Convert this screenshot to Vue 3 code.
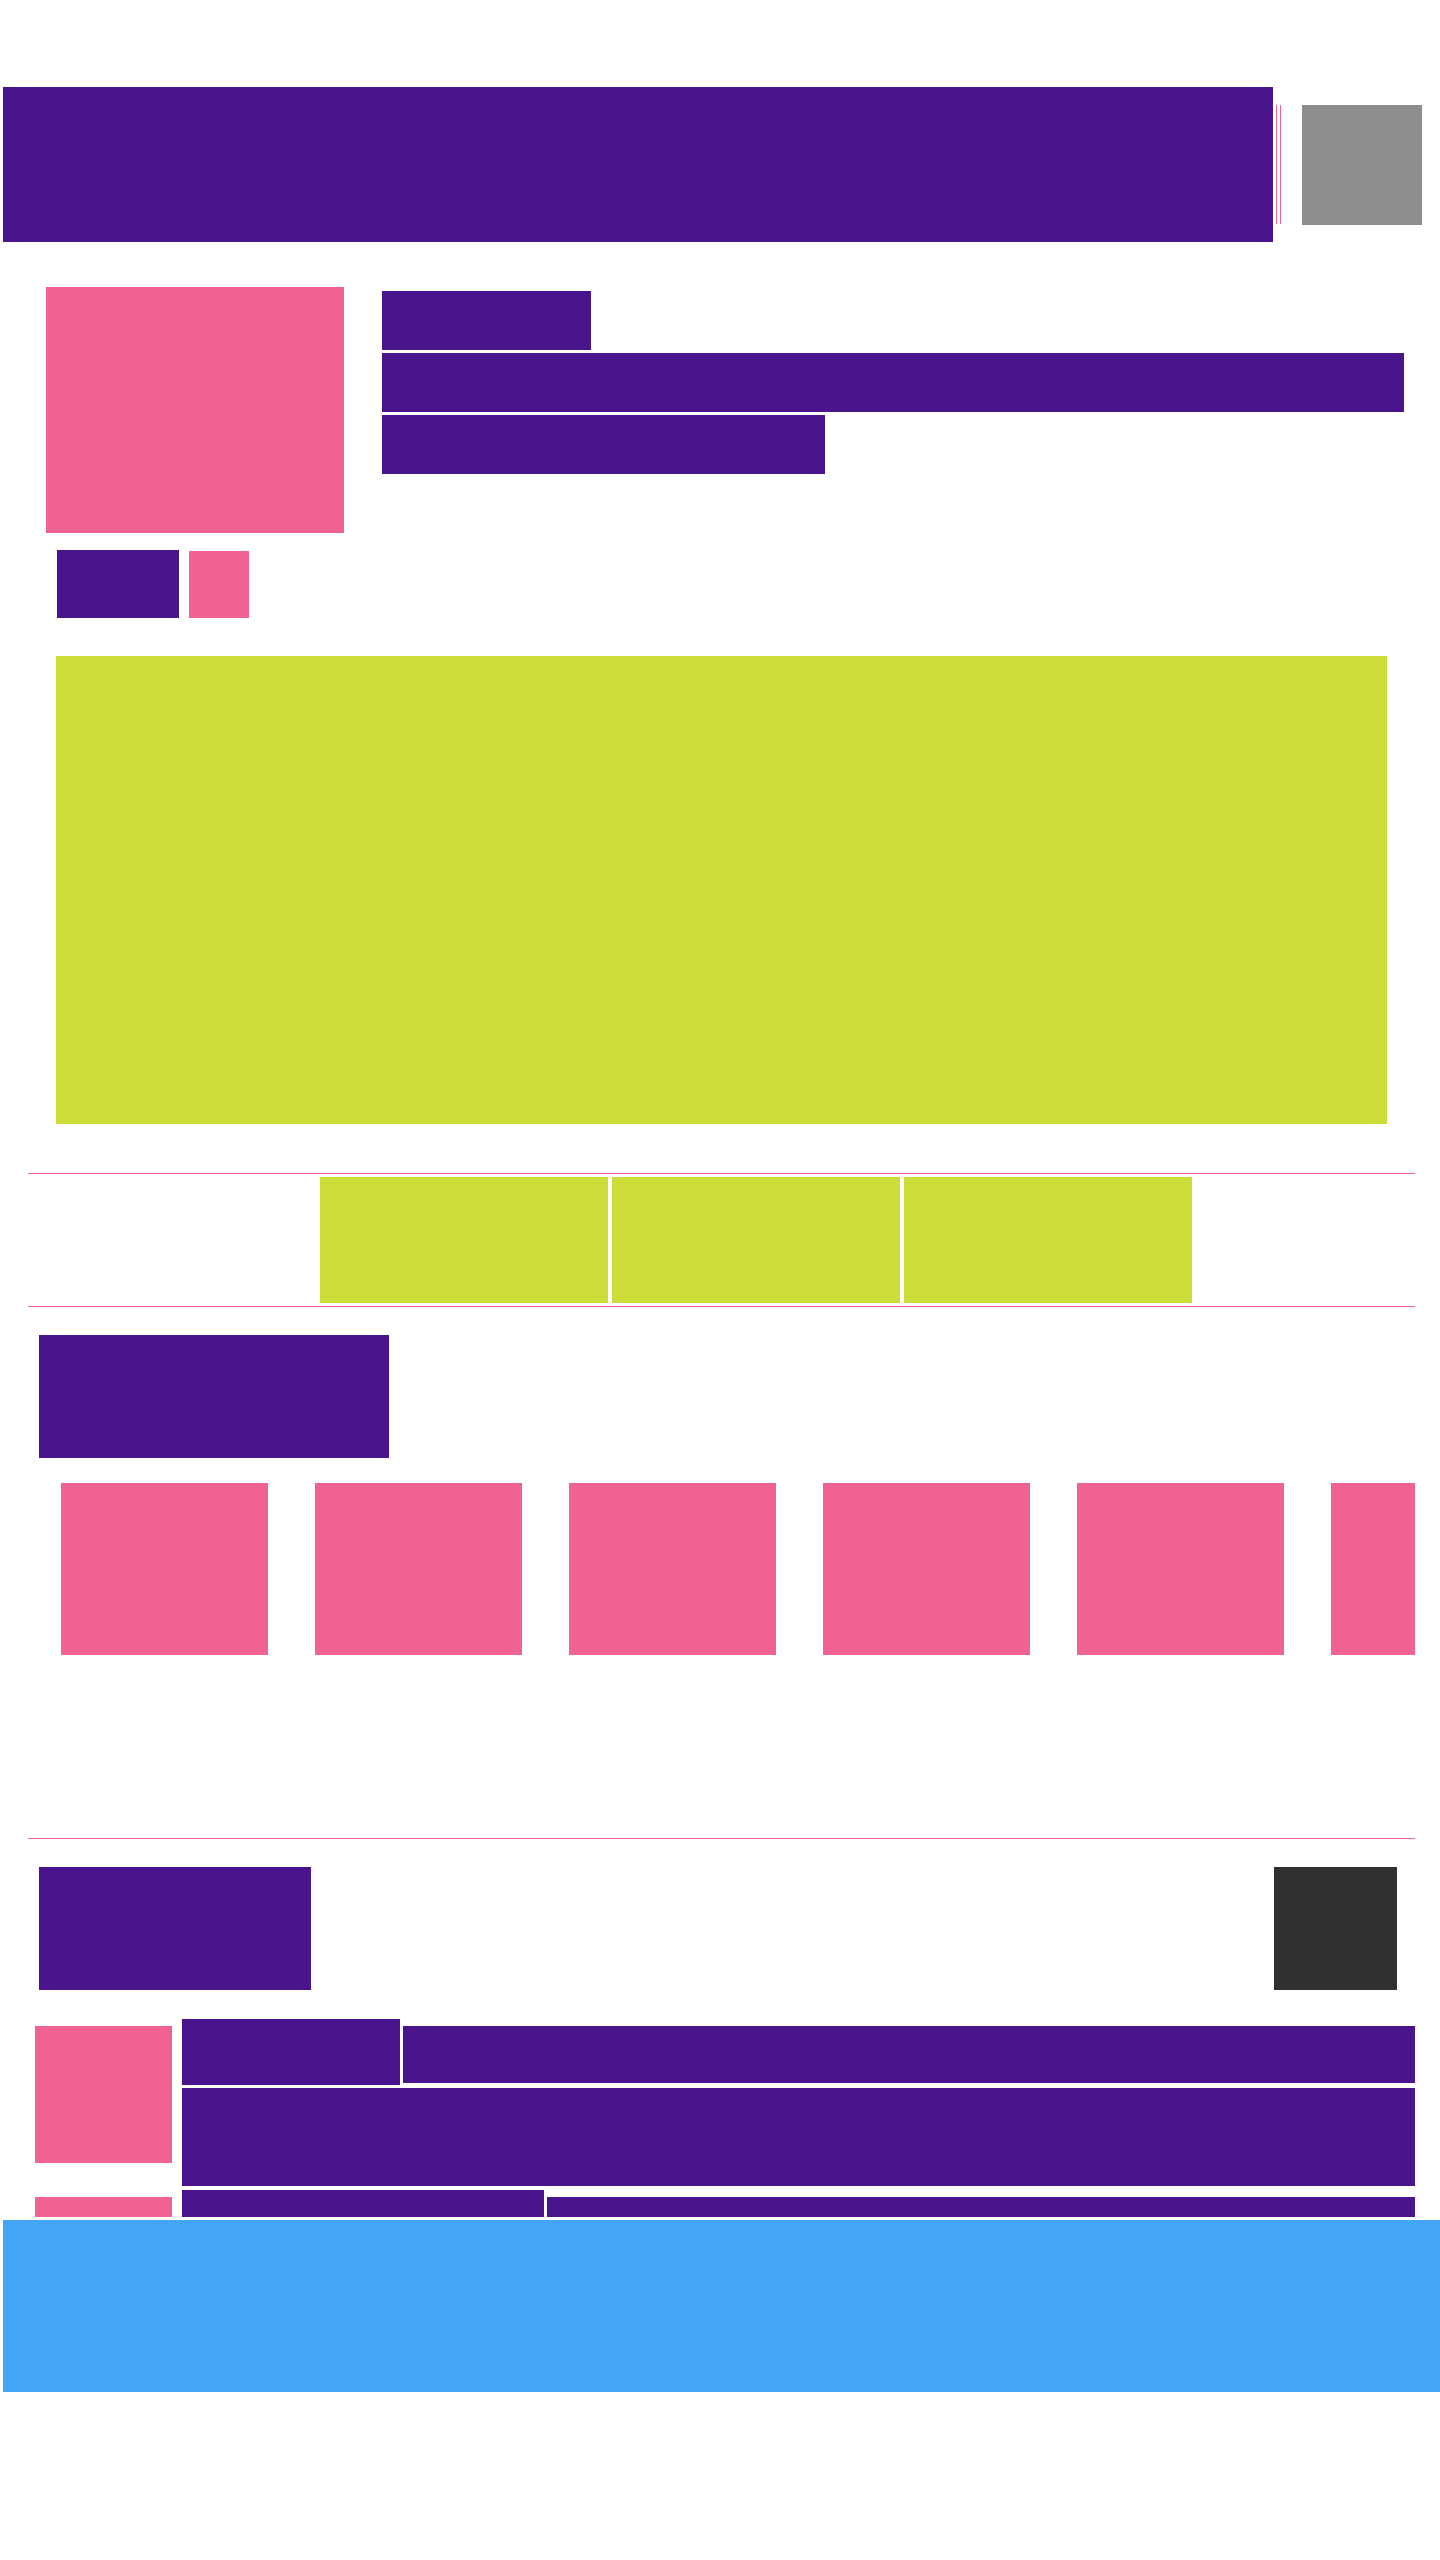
<script setup>
const summaryLines = ['short', 'full', 'medium']
const actions = [1, 2, 3]
const cards = [1, 2, 3, 4, 5, 6]
const reviews = [
  { id: 1, size: 'narrow' },
  { id: 2, size: 'wide' },
]
</script>

<template>
  <div class="page">
    <header class="top-bar">
      <div class="title-block"></div>
      <div class="dividers"><span></span><span></span></div>
      <button class="menu-button" type="button" aria-label="Menu"></button>
    </header>

    <main>
      <section class="intro">
        <div class="cover"></div>
        <div class="summary">
          <div v-for="size in summaryLines" :key="size" class="summary-line" :class="size"></div>
        </div>
      </section>

      <div class="rating">
        <div class="rating-value"></div>
        <div class="rating-icon"></div>
      </div>

      <div class="banner"></div>

      <div class="actions">
        <button v-for="n in actions" :key="n" class="action" type="button" :aria-label="`Action ${n}`"></button>
      </div>

      <section class="gallery">
        <div class="heading gallery-heading"></div>
        <div class="cards">
          <div v-for="n in cards" :key="n" class="card"></div>
        </div>
      </section>

      <section class="reviews">
        <div class="reviews-head">
          <div class="heading reviews-heading"></div>
          <button class="more-button" type="button" aria-label="More"></button>
        </div>
        <div class="review-list">
          <article v-for="review in reviews" :key="review.id" class="review">
            <div class="avatar"></div>
            <div class="review-content">
              <div class="review-meta">
                <div class="author" :class="review.size"></div>
                <div class="details"></div>
              </div>
              <div class="review-body"></div>
            </div>
          </article>
        </div>
      </section>
    </main>

    <footer class="bottom-bar"></footer>
  </div>
</template>

<style>
body {
  background: #fff;
}
</style>

<style scoped>
.page {
  --purple: #4a148c;
  --pink: #f06292;
  --lime: #cddc39;
  padding: 87px 0 168px;
  overflow: hidden;
}

button {
  display: block;
  border: 0;
  border-radius: 0;
  padding: 0;
}

.top-bar {
  display: flex;
  align-items: center;
  padding: 0 18px 0 3px;
}

.title-block {
  flex: 1;
  height: 155px;
  background: var(--purple);
}

.dividers {
  display: flex;
  gap: 3px;
  margin: 0 21px 0 3px;
}

.dividers span {
  width: 1px;
  height: 119px;
  background: var(--pink);
}

.menu-button {
  width: 120px;
  height: 120px;
  background: #8e8e8e;
}

.intro {
  display: flex;
  gap: 38px;
  padding: 45px 36px 0 46px;
}

.cover {
  flex: none;
  width: 298px;
  height: 246px;
  background: var(--pink);
}

.summary {
  flex: 1;
  display: flex;
  flex-direction: column;
  gap: 3px;
  padding-top: 4px;
}

.summary-line {
  height: 59px;
  background: var(--purple);
}

.summary-line.short {
  width: 209px;
}

.summary-line.medium {
  width: 443px;
}

.rating {
  display: flex;
  align-items: flex-end;
  gap: 10px;
  padding: 17px 57px 38px;
}

.rating-value {
  width: 122px;
  height: 68px;
  background: var(--purple);
}

.rating-icon {
  width: 60px;
  height: 67px;
  background: var(--pink);
}

.banner {
  height: 468px;
  margin: 0 53px 49px 56px;
  background: var(--lime);
}

.actions {
  display: flex;
  justify-content: center;
  gap: 4px;
  margin: 0 25px 0 28px;
  padding: 3px 0 3px 69px;
  border-top: 1px solid var(--pink);
  border-bottom: 1px solid var(--pink);
}

.action {
  width: 288px;
  height: 126px;
  background: var(--lime);
}

.gallery {
  margin: 0 25px 0 28px;
  padding: 28px 0 183px;
  border-bottom: 1px solid var(--pink);
}

.heading {
  height: 123px;
  background: var(--purple);
}

.gallery-heading {
  width: 350px;
  margin-left: 11px;
}

.cards {
  display: flex;
  gap: 47px;
  margin-top: 25px;
  padding-left: 33px;
  overflow: hidden;
}

.card {
  flex: none;
  width: 207px;
  height: 172px;
  background: var(--pink);
}

.reviews {
  padding: 28px 25px 0 35px;
}

.reviews-head {
  display: flex;
  justify-content: space-between;
  padding: 0 18px 0 4px;
}

.reviews-heading {
  width: 272px;
}

.more-button {
  width: 123px;
  height: 123px;
  background: #303030;
}

/* The list is cut off above the bottom bar, part way through a review. */
.review-list {
  display: flex;
  flex-direction: column;
  gap: 4px;
  height: 198px;
  margin: 29px 0 3px;
  overflow: hidden;
}

.review {
  flex: none;
  display: flex;
  gap: 10px;
}

.avatar {
  flex: none;
  width: 137px;
  height: 137px;
  margin-top: 7px;
  background: var(--pink);
}

.review-content {
  flex: 1;
}

.review-meta {
  display: flex;
  gap: 3px;
}

.author {
  height: 66px;
  background: var(--purple);
}

.author.narrow {
  width: 218px;
}

.author.wide {
  width: 362px;
}

.details {
  flex: 1;
  height: 57px;
  margin-top: 7px;
  background: var(--purple);
}

.review-body {
  height: 98px;
  margin-top: 3px;
  background: var(--purple);
}

.bottom-bar {
  height: 172px;
  margin-left: 3px;
  background: #42a5f5;
}
</style>
